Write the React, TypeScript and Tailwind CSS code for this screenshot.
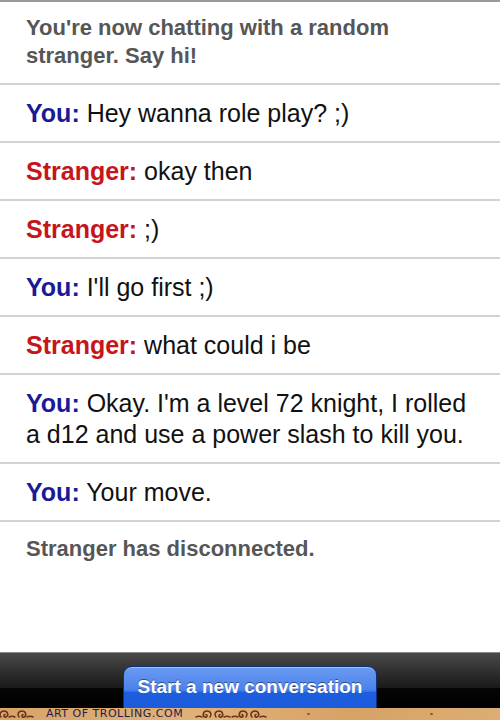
type Msg = { who?: "You" | "Stranger"; text: string; system?: boolean };

const messages: Msg[] = [
  { who: "You", text: "Hey wanna role play? ;)" },
  { who: "Stranger", text: "okay then" },
  { who: "Stranger", text: ";)" },
  { who: "You", text: "I'll go first ;)" },
  { who: "Stranger", text: "what could i be" },
  { who: "You", text: "Okay. I'm a level 72 knight, I rolled a d12 and use a power slash to kill you." },
  { who: "You", text: "Your move." },
];

function Swirl({ flip = false }: { flip?: boolean }) {
  return (
    <svg width="18" height="12" viewBox="0 0 18 12" className={flip ? "-scale-x-100" : ""}>
      <path
        d="M3 9 C1 7 2 3 6 3 C10 3 11 8 8 9 C6 10 5 7 7 6.5"
        fill="none"
        stroke="#6a3516"
        strokeWidth="1.6"
        strokeLinecap="round"
      />
      <path d="M11 9 C13 8 15 8 17 9" fill="none" stroke="#6a3516" strokeWidth="1.4" strokeLinecap="round" />
    </svg>
  );
}

function Row({ m }: { m: Msg }) {
  return (
    <div className="border-t-2 border-[#d2d2d2] px-[26px] pt-[13px] pb-[12px] text-[25px] leading-[31px] text-[#111]">
      <span className={m.who === "You" ? "font-bold text-[#1a1a98]" : "font-bold text-[#c4161c]"}>{m.who}:</span>{" "}
      {m.text}
    </div>
  );
}

export default function App() {
  return (
    <div className="w-[500px] h-[720px] flex flex-col bg-white overflow-hidden font-['Liberation_Sans',Arial,sans-serif]">
      <div className="flex-1 flex flex-col">
        <div className="border-t-2 border-[#9a9a9a] px-[26px] pt-[12px] pb-[13px] pr-[100px] text-[22px] leading-[28px] font-bold text-[#565656]">
          You're now chatting with a random stranger. Say hi!
        </div>
        {messages.map((m, i) => (
          <Row key={i} m={m} />
        ))}
        <div className="border-t-2 border-[#d2d2d2] px-[26px] pt-[13px] text-[22px] leading-[28px] font-bold text-[#565656]">
          Stranger has disconnected.
        </div>
      </div>

      <div className="h-[56px] shrink-0 flex flex-col items-center overflow-hidden border-t border-[#8c8c8c] bg-[linear-gradient(to_bottom,#4a4a4a_0%,#2a2a2a_40%,#1a1a1a_63%,#050505_64%,#000_100%)] pt-[13px]">
        <div className="w-[254px] h-[52px] shrink-0 rounded-[9px] border border-[#10307a] bg-[linear-gradient(to_bottom,#6b9bf2_0%,#4a82ec_45%,#3470e6_49%,#1d5edd_50%,#1b5bdc_100%)] flex justify-center pt-[9px] shadow-[inset_0_1px_0_rgba(255,255,255,0.35)]">
          <span className="text-white font-bold text-[19px] leading-[22px] [text-shadow:0_-1px_0_rgba(0,0,0,0.45)]">
            Start a new conversation
          </span>
        </div>
      </div>

      <div className="h-[12px] shrink-0 flex items-center bg-[linear-gradient(to_right,#d8a468,#e0b27a_40%,#d6a266_70%,#dcae74)] overflow-hidden">
        <div className="flex items-center -ml-[2px]">
          <Swirl />
          <Swirl />
        </div>
        <span className="ml-[12px] text-[11px] leading-[12px] tracking-[0.5px] text-[#231c50] font-['DejaVu_Sans',sans-serif]">
          ART OF TROLLING.COM
        </span>
        <div className="flex items-center ml-[12px]">
          <Swirl flip />
          <Swirl />
          <Swirl flip />
          <Swirl />
        </div>
        <div className="ml-[40px] w-[3px] h-[2px] bg-[#8a5a2a] rounded-full" />
        <div className="ml-[120px] w-[3px] h-[2px] bg-[#8a5a2a] rounded-full" />
      </div>
    </div>
  );
}
